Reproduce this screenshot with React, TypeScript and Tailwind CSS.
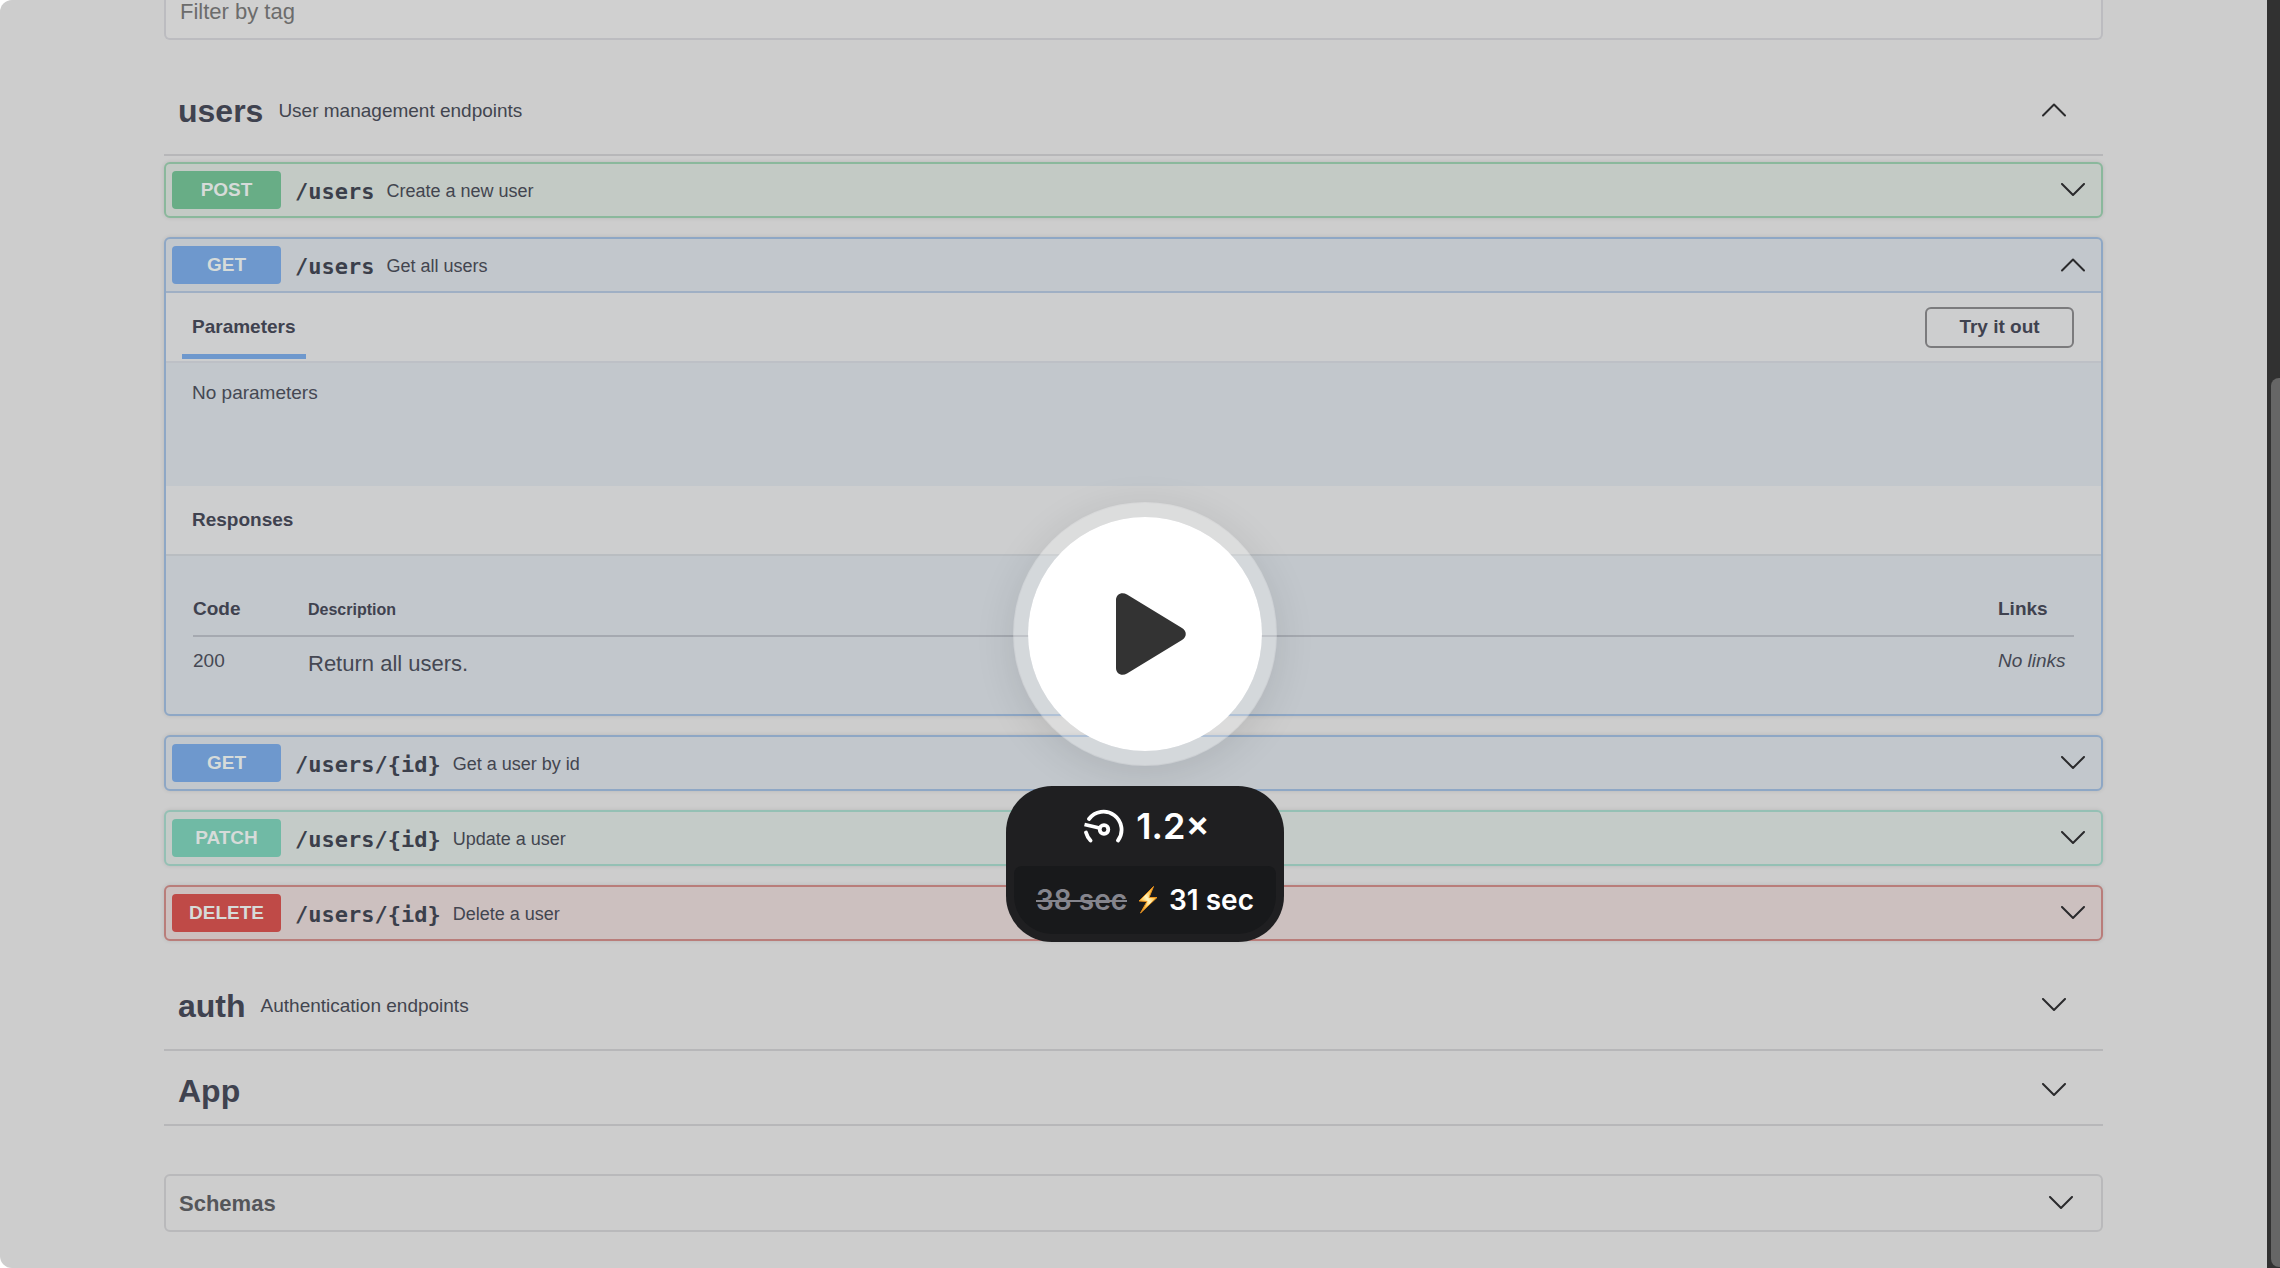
import type { ReactNode } from "react";

type Tone = "post" | "get" | "patch" | "delete";

const tones: Record<Tone, { box: string; badge: string }> = {
  post: { box: "border-[#8ab89c] bg-[#c3cac5]", badge: "bg-[#68ad86]" },
  get: { box: "border-[#8ea7c5] bg-[#c2c7cc]", badge: "bg-[#6e98cd]" },
  patch: { box: "border-[#94c0b4] bg-[#c4cbc8]", badge: "bg-[#70baa5]" },
  delete: { box: "border-[#b97d7a] bg-[#ccc0bf]", badge: "bg-[#bf4a47]" },
};

function Chevron({ up = false }: { up?: boolean }) {
  return (
    <svg
      viewBox="0 0 26 14"
      className="h-[14px] w-[26px] shrink-0"
      fill="none"
      stroke="#2a2a2c"
      strokeWidth="2"
      strokeLinecap="round"
      strokeLinejoin="round"
      aria-hidden="true"
    >
      <path d={up ? "M2 12.500 L13 1.500 L24 12.500" : "M2 1 L13 12 L24 1"} />
    </svg>
  );
}

function Operation({
  method,
  tone,
  path,
  summary,
  children,
}: {
  method: string;
  tone: Tone;
  path: string;
  summary: string;
  children?: ReactNode;
}) {
  return (
    <section
      className={`overflow-hidden rounded-md border-2 shadow-[0_0_4px_rgba(0,0,0,0.1)] ${tones[tone].box}`}
    >
      <button
        type="button"
        aria-expanded={Boolean(children)}
        className="flex h-[52px] w-full items-center pr-[15px] pl-[6px] text-left"
      >
        <span
          className={`flex h-[38px] w-[109px] items-center justify-center rounded text-[19px] font-bold text-[#d6dbd9] ${tones[tone].badge}`}
        >
          {method}
        </span>
        <span className="ml-[14px] pt-0.5 font-['DejaVu_Sans_Mono',monospace] text-[22px] font-bold text-[#3b3f4b]">
          {path}
        </span>
        <span className="ml-3 flex-1 pt-0.5 text-[18px] text-[#42454f]">{summary}</span>
        <Chevron up={Boolean(children)} />
      </button>
      {children}
    </section>
  );
}

function TagHeader({
  name,
  description,
  open = false,
  className,
}: {
  name: string;
  description?: string;
  open?: boolean;
  className: string;
}) {
  return (
    <button
      type="button"
      aria-expanded={open}
      className={`flex w-full items-center border-b-2 border-[#b7b7b9] pr-9 pl-[14px] text-left ${className}`}
    >
      <span className="pt-0.5 text-[32px] font-bold text-[#3f424f]">{name}</span>
      <span className="ml-[15px] flex-1 pt-0.5 text-[19px] text-[#42454f]">{description}</span>
      <Chevron up={open} />
    </button>
  );
}

function PlayOverlay() {
  return (
    <div className="pointer-events-none absolute inset-0 flex flex-col items-center pt-[502px] pl-[10px]">
      <button
        type="button"
        aria-label="Play video"
        className="pointer-events-auto flex size-[264px] items-center justify-center rounded-full border-[15px] border-white/30 bg-white bg-clip-padding shadow-[0_8px_40px_rgba(0,0,0,0.1)]"
      >
        <svg viewBox="0 0 72 82" className="ml-3 h-[82px] w-[72px]" aria-hidden="true">
          <path
            d="M1 7 C1 1 7 -1.500 12 1.500 L67 35 C72 38 72 44 67 47 L12 80.500 C7 83.500 1 81 1 75 Z"
            fill="#333333"
          />
        </svg>
      </button>
      <div className="mt-5 flex w-[278px] flex-col rounded-[46px] bg-[#1f1f21] p-2 pt-0 font-[Inter,sans-serif] font-semibold text-white">
        <div className="flex h-20 items-center justify-center gap-3 pl-1 text-[36px]">
          <svg
            viewBox="0 0 40 36"
            className="h-9 w-10"
            fill="none"
            stroke="white"
            strokeWidth="3.800"
            aria-hidden="true"
          >
            <path d="M5 11 A18 18 0 1 1 34 32.500" strokeLinecap="round" />
            <path d="M2 24.500 A19 19 0 0 0 6.500 32.500" strokeLinecap="round" />
            <path d="M0.500 16.500 L15.500 20" />
            <circle cx="20" cy="21.500" r="4.300" />
          </svg>
          <span>1.2×</span>
        </div>
        <div className="flex h-[68px] items-center justify-center gap-[11px] rounded-t-lg rounded-b-[38px] bg-[#18191b] text-[28px]">
          <s className="text-[#85858d]">38 sec</s>
          <svg viewBox="0 0 20 28" className="h-7 w-5" aria-hidden="true">
            <defs>
              <linearGradient id="bolt" x1="1" y1="0" x2="0" y2="1">
                <stop offset="0" stopColor="#e8891c" />
                <stop offset="0.300" stopColor="#ffc54a" />
                <stop offset="0.500" stopColor="#fff6c4" />
                <stop offset="0.700" stopColor="#ffc54a" />
                <stop offset="1" stopColor="#d97a17" />
              </linearGradient>
            </defs>
            <path
              d="M15.500 0.500 L1 15 L9 15.500 L2.500 27 L19 11.500 L11 11.500 Z"
              fill="url(#bolt)"
              stroke="#e8921f"
              strokeWidth="1"
              strokeLinejoin="round"
            />
          </svg>
          <span>31 sec</span>
        </div>
      </div>
    </div>
  );
}

export default function App() {
  return (
    <div className="relative flex min-h-screen overflow-hidden bg-white font-['Liberation_Sans',Arial,sans-serif]">
      <main className="flex-1 rounded-l-xl bg-[#cdcdcd] px-[164px] pb-9">
        <input
          type="text"
          aria-label="Filter by tag"
          placeholder="Filter by tag"
          className="block h-10 w-full rounded-b-md border-2 border-t-0 border-[#bcbcc0] bg-[#d0d0d0] px-[14px] pb-[14px] text-[22px] leading-6 text-[#4a4a4a] placeholder:text-[#6c6c6c]"
        />

        <TagHeader name="users" description="User management endpoints" open className="mt-[26px] h-[90px]" />
        <div className="mt-[6px] flex flex-col gap-[19px]">
          <Operation method="POST" tone="post" path="/users" summary="Create a new user" />
          <Operation method="GET" tone="get" path="/users" summary="Get all users">
            <div className="border-t-2 border-[#9fafc4] text-[19px] text-[#454853]">
              <div className="flex h-[70px] items-center justify-between border-b-2 border-[#bdc0c6] bg-[#cdcecf] pr-[27px] pl-4">
                <h4 className="flex h-[66px] items-center self-start border-b-[5px] border-[#6e98cd] px-[10px] pt-2 font-bold text-[#3f424f]">
                  Parameters
                </h4>
                <button
                  type="button"
                  className="h-[41px] w-[149px] rounded-md border-2 border-[#7b7b7d] font-bold text-[#3f424f]"
                >
                  Try it out
                </button>
              </div>
              <p className="h-[123px] px-[26px] pt-[18px] leading-6">No parameters</p>
              <h4 className="flex h-[70px] items-center border-b-2 border-[#b9bdc1] bg-[#cdcecf] px-[26px] font-bold text-[#3f424f]">
                Responses
              </h4>
              <div className="px-[27px] pt-9 pb-9">
                <table className="w-full text-left">
                  <thead>
                    <tr className="border-b-2 border-[#a5a9b0] text-[#3f424f]">
                      <th className="h-11 w-[115px] pb-2 font-bold">Code</th>
                      <th className="pb-2 text-[16px] font-bold">Description</th>
                      <th className="w-[76px] pb-2 font-bold">Links</th>
                    </tr>
                  </thead>
                  <tbody>
                    <tr>
                      <td className="h-[42px] pt-2">200</td>
                      <td className="pt-3 text-[22px] leading-7">Return all users.</td>
                      <td className="pt-2 italic">No links</td>
                    </tr>
                  </tbody>
                </table>
              </div>
            </div>
          </Operation>
          <Operation method="GET" tone="get" path="/users/{id}" summary="Get a user by id" />
          <Operation method="PATCH" tone="patch" path="/users/{id}" summary="Update a user" />
          <Operation method="DELETE" tone="delete" path="/users/{id}" summary="Delete a user" />
        </div>

        <TagHeader name="auth" description="Authentication endpoints" className="mt-5 h-[90px]" />
        <TagHeader name="App" className="h-[75px] pt-1" />

        <button
          type="button"
          className="mt-12 flex h-[58px] w-full items-center justify-between rounded-md border-2 border-[#b9b9bb] pr-[27px] pl-[13px] text-[22px] font-bold text-[#55565a]"
        >
          Schemas
          <Chevron />
        </button>
      </main>

      <div className="flex w-[13px] flex-col bg-[#313131] pt-[378px] pb-px pl-1" aria-hidden="true">
        <div className="flex-1 rounded-l-lg bg-[#666666]" />
      </div>

      <PlayOverlay />
    </div>
  );
}
